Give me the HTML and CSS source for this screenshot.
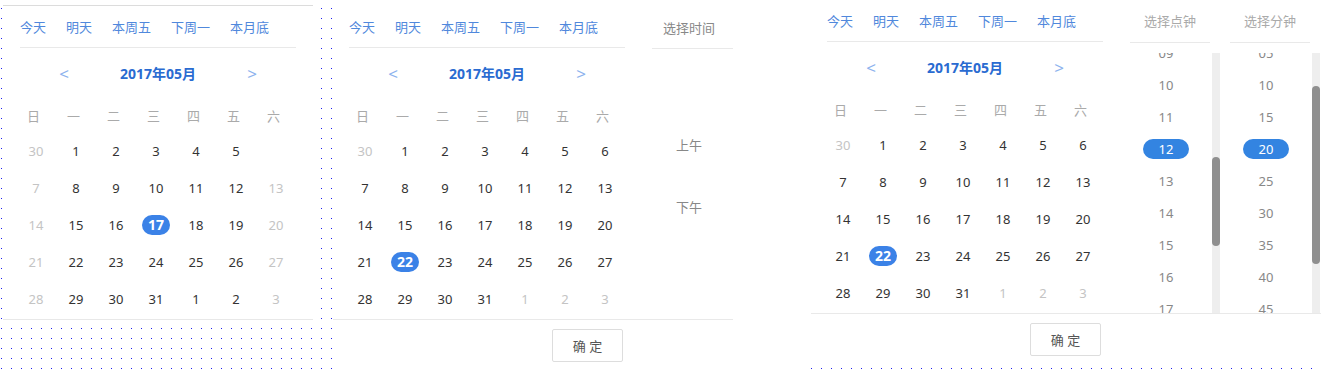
FILE: index.html
```html
<!DOCTYPE html>
<html lang="zh-CN">
<head>
    <meta charset="UTF-8">
    <title>日期时间选择</title>
    <link rel="stylesheet" href="styles.css">
</head>
<body>
<div class="page">

    <!-- 只有日期 -->
    <div class="col-a">
        <div class="panel-a">
            <div class="cal">
                <div class="quick"><a>今天</a><a>明天</a><a>本周五</a><a>下周一</a><a>本月底</a></div>
                <div class="head"><span class="arrow">&lt;</span><span class="title">2017年05月</span><span class="arrow">&gt;</span></div>
                <div class="week"><span>日</span><span>一</span><span>二</span><span>三</span><span>四</span><span>五</span><span>六</span></div>
                <div class="days">
                    <span class="o">30</span><span>1</span><span>2</span><span>3</span><span>4</span><span>5</span><span></span>
                    <span class="o">7</span><span>8</span><span>9</span><span>10</span><span>11</span><span>12</span><span class="o">13</span>
                    <span class="o">14</span><span>15</span><span>16</span><span class="on">17</span><span>18</span><span>19</span><span class="o">20</span>
                    <span class="o">21</span><span>22</span><span>23</span><span>24</span><span>25</span><span>26</span><span class="o">27</span>
                    <span class="o">28</span><span>29</span><span>30</span><span>31</span><span>1</span><span>2</span><span class="o">3</span>
                </div>
            </div>
        </div>
    </div>

    <!-- 日期 + 上午/下午 -->
    <div class="col-b">
        <div class="picker picker-b">
            <div class="picker-body">
                <div class="cal">
                    <div class="quick"><a>今天</a><a>明天</a><a>本周五</a><a>下周一</a><a>本月底</a></div>
                    <div class="head"><span class="arrow">&lt;</span><span class="title">2017年05月</span><span class="arrow">&gt;</span></div>
                    <div class="week"><span>日</span><span>一</span><span>二</span><span>三</span><span>四</span><span>五</span><span>六</span></div>
                    <div class="days">
                        <span class="o">30</span><span>1</span><span>2</span><span>3</span><span>4</span><span>5</span><span>6</span>
                        <span>7</span><span>8</span><span>9</span><span>10</span><span>11</span><span>12</span><span>13</span>
                        <span>14</span><span>15</span><span>16</span><span>17</span><span>18</span><span>19</span><span>20</span>
                        <span>21</span><span class="on">22</span><span>23</span><span>24</span><span>25</span><span>26</span><span>27</span>
                        <span>28</span><span>29</span><span>30</span><span>31</span><span class="o">1</span><span class="o">2</span><span class="o">3</span>
                    </div>
                </div>
                <div class="ampm">
                    <div class="time-head">选择时间</div>
                    <div class="ampm-list">
                        <div>上午</div>
                        <div>下午</div>
                    </div>
                </div>
            </div>
            <div class="foot"><button>确 定</button></div>
        </div>
    </div>

    <!-- 日期 + 点钟/分钟 -->
    <div class="col-c">
        <div class="picker picker-c">
            <div class="picker-body">
                <div class="cal">
                    <div class="quick"><a>今天</a><a>明天</a><a>本周五</a><a>下周一</a><a>本月底</a></div>
                    <div class="head"><span class="arrow">&lt;</span><span class="title">2017年05月</span><span class="arrow">&gt;</span></div>
                    <div class="week"><span>日</span><span>一</span><span>二</span><span>三</span><span>四</span><span>五</span><span>六</span></div>
                    <div class="days">
                        <span class="o">30</span><span>1</span><span>2</span><span>3</span><span>4</span><span>5</span><span>6</span>
                        <span>7</span><span>8</span><span>9</span><span>10</span><span>11</span><span>12</span><span>13</span>
                        <span>14</span><span>15</span><span>16</span><span>17</span><span>18</span><span>19</span><span>20</span>
                        <span>21</span><span class="on">22</span><span>23</span><span>24</span><span>25</span><span>26</span><span>27</span>
                        <span>28</span><span>29</span><span>30</span><span>31</span><span class="o">1</span><span class="o">2</span><span class="o">3</span>
                    </div>
                </div>

                <!-- 列表已滚动，只画可见的几项 -->
                <div class="tcol">
                    <div class="time-head">选择点钟</div>
                    <div class="tlist-wrap">
                        <div class="tlist">
                            <div class="tlist-inner">
                                <div>09</div><div>10</div><div>11</div>
                                <div class="on"><span>12</span></div><div>13</div><div>14</div>
                                <div>15</div><div>16</div><div>17</div>
                            </div>
                        </div>
                        <div class="track"><div class="thumb" style="margin-top: 104px; height: 89px;"></div></div>
                    </div>
                </div>

                <div class="tcol">
                    <div class="time-head">选择分钟</div>
                    <div class="tlist-wrap">
                        <div class="tlist">
                            <div class="tlist-inner">
                                <div>05</div><div>10</div><div>15</div>
                                <div class="on"><span>20</span></div><div>25</div><div>30</div>
                                <div>35</div><div>40</div><div>45</div>
                            </div>
                        </div>
                        <div class="track"><div class="thumb" style="margin-top: 33px; height: 178px;"></div></div>
                    </div>
                </div>
            </div>
            <div class="foot"><button>确 定</button></div>
        </div>
    </div>

</div>
</body>
</html>
```

FILE: styles.css
```css
* {
    box-sizing: border-box;
}
body {
    margin: 0;
    width: 1321px;
    height: 369px;
    overflow: hidden;
    font-family: "Noto Sans", "Noto Sans CJK SC", sans-serif;
    font-size: 13px;
    line-height: 20px;
    color: #333;
    /* 点阵背景 */
    background-color: #2020f0;
    background-image: linear-gradient(90deg, transparent 1px, #fff 1px), linear-gradient(transparent 1px, #fff 1px);
    background-size: 10px 10px;
    background-position: 1px 8px;
}
.page {
    display: flex;
    align-items: flex-start;
}
.col-a {
    width: 333px;
    padding: 5px 0 0 3px;
}
.panel-a {
    width: 310px;
    padding: 0 1px;
    background: #fff;
    border-top: 1px solid #dcdcdc;
    border-bottom: 1px solid #e8e8e8;
}
.col-b {
    width: 478px;
    height: 369px;
    padding-top: 6px;
    background: #fff;
}
.col-c {
    width: 510px;
    height: 367px;
    background: #fff;
}

/* 日历 */
.cal {
    width: 308px;
    height: 313px;
    padding: 0 16px;
}
.quick {
    display: flex;
    align-items: center;
    gap: 20px;
    height: 42px;
    border-bottom: 1px solid #e9e9e9;
}
.quick a {
    color: #5088dc;
}
.head {
    display: flex;
    justify-content: center;
    align-items: center;
    height: 52px;
    margin: 0 -16px;
}
.head .arrow {
    width: 20px;
    text-align: center;
    font-size: 17px;
    color: #8db3ee;
}
.head .title {
    width: 168px;
    text-align: center;
    font-size: 14px;
    font-weight: bold;
    color: #2a6bd1;
}
.week,
.days {
    display: grid;
    grid-template-columns: repeat(7, 40px);
    margin: 0 -4px;
}
.week {
    height: 32px;
    align-items: center;
    color: #aaa;
}
.week span {
    text-align: center;
    padding-right: 5px;
}
.days {
    grid-auto-rows: 37px;
    align-items: center;
}
.days span {
    text-align: center;
}
.days .o {
    color: #c4c4c4;
}
.days .on {
    justify-self: center;
    width: 28px;
    height: 20px;
    line-height: 20px;
    border-radius: 10px;
    background: #3b82e7;
    color: #fff;
    font-size: 14px;
    font-weight: bold;
}

/* 带时间的面板 */
.picker-b {
    width: 400px;
}
.picker-c {
    width: 510px;
}
.picker-body {
    display: flex;
    height: 313px;
}
.time-head {
    display: flex;
    justify-content: center;
    align-items: center;
    height: 43px;
    border-bottom: 1px solid #e9e9e9;
    color: #aaa;
}
.ampm {
    width: 81px;
    margin-left: 11px;
}
.ampm .time-head {
    padding: 1px 7px 0 0;
    color: #888;
}
.ampm-list {
    margin-top: 65px;
}
.ampm-list div {
    height: 62px;
    line-height: 62px;
    padding-right: 7px;
    text-align: center;
    color: #888;
}
.tcol {
    width: 90px;
    margin-left: 10px;
}
.cal + .tcol {
    margin-left: 11px;
}
.tcol .time-head {
    width: 80px;
}
.tlist-wrap {
    display: flex;
    height: 260px;
    margin-top: 10px;
}
.tlist {
    width: 72px;
    overflow: hidden;
    color: #888;
}
.tlist-inner {
    margin-top: -16px;
}
.tlist-inner div {
    display: flex;
    justify-content: center;
    align-items: center;
    height: 32px;
}
.tlist-inner .on span {
    width: 46px;
    height: 20px;
    line-height: 20px;
    border-radius: 10px;
    text-align: center;
    background: #3384e1;
    color: #fff;
}
.track {
    width: 8px;
    margin-left: 10px;
    background: #eee;
}
.thumb {
    width: 8px;
    border-radius: 4px;
    background: #8f8f8f;
}

.foot {
    border-top: 1px solid #e9e9e9;
    padding: 9px 0 0 219px;
}
.foot button {
    width: 71px;
    height: 33px;
    padding: 0;
    border: 1px solid #ddd;
    border-radius: 2px;
    background: #fff;
    font-family: inherit;
    font-size: 13px;
    color: #555;
}
```
